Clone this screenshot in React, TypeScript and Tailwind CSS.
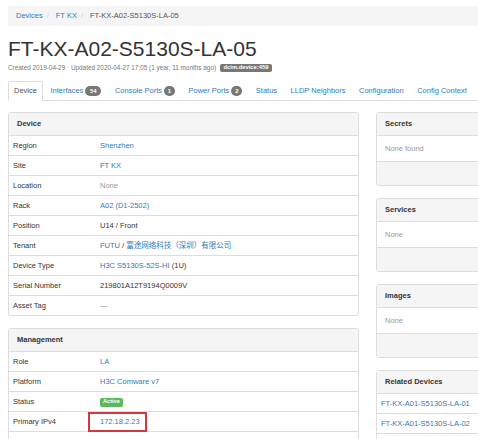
const linkCls = "text-[#337ab7]";

function Badge({ children, minW }: { children: React.ReactNode; minW?: string }) {
    return (
        <span
            className={`ml-[2px] inline-flex h-[10px] items-center justify-center rounded-full bg-[#777] px-[3px] text-[6px] font-bold leading-none text-white ${minW ?? ""}`}
        >
            {children}
        </span>
    );
}

function Tab({ label, badge, active }: { label: string; badge?: string; active?: boolean }) {
    return (
        <li className="-mb-px">
            <span
                className={
                    active
                        ? "flex h-[20px] items-center rounded-t-[2px] border border-[#ddd] border-b-white bg-white px-[5px] text-[#555]"
                        : "flex h-[20px] items-center border border-transparent px-[5px] text-[#337ab7]"
                }
            >
                {label}
                {badge && <Badge minW={badge.length > 1 ? "w-[16px]" : "w-[11px]"}>{badge}</Badge>}
            </span>
        </li>
    );
}

function Row({ label, children }: { label: string; children: React.ReactNode }) {
    return (
        <div className="flex h-[20px] items-center border-t border-[#ddd]">
            <div className="w-[87px] px-[4px]">{label}</div>
            <div className="px-[4px]">{children}</div>
        </div>
    );
}

function PanelHeader({ title }: { title: string }) {
    return (
        <div className="flex h-[22px] items-center bg-[#f5f5f5] px-[8px] font-bold text-[#333]">
            {title}
        </div>
    );
}

function EmptyPanel({ title, text }: { title: string; text: string }) {
    return (
        <div className="mb-[12px] overflow-hidden rounded-[3px] border border-[#ddd]">
            <PanelHeader title={title} />
            <div className="flex h-[26px] items-center border-t border-[#ddd] px-[8px] text-[#999]">
                {text}
            </div>
            <div className="h-[24px] border-t border-[#ddd] bg-[#f5f5f5]" />
        </div>
    );
}

export default function App() {
    return (
        <div
            className="h-[439px] w-[478px] overflow-hidden bg-white text-[7.5px] leading-[1.3] text-[#333]"
            style={{ fontFamily: '"Liberation Sans", "Noto Sans CJK SC", Arial, sans-serif' }}
        >
            <div className="w-[627px] pl-[8px]">

                <div className="mt-[6px] flex h-[20px] items-center rounded-[2px] bg-[#f5f5f5] px-[8px]">
                    <span className={linkCls}>Devices</span>
                    <span className="ml-[4px] mr-[7px] text-[#ccc]">/</span>
                    <span className={linkCls}>FT KX</span>
                    <span className="ml-[4px] mr-[7px] text-[#ccc]">/</span>
                    <span className="text-[#555]">FT-KX-A02-S5130S-LA-05</span>
                </div>

                <h1 className="mt-[11px] text-[21px] leading-[23px] font-normal text-[#333]">
                    FT-KX-A02-S5130S-LA-05
                </h1>

                <div className="mt-[3px] flex h-[10px] items-center text-[6.4px] text-[#777]">
                    <span>Created 2019-04-29 · Updated 2020-04-27 17:05 (1 year, 11 months ago)</span>
                    <span className="ml-[4px] rounded-[2px] bg-[#777] px-[3.5px] py-[1px] text-[5.8px] font-bold leading-none text-white">
                        dcim.device:459
                    </span>
                </div>

                <ul className="mt-[8px] flex gap-[1.5px] border-b border-[#ddd]">
                    <Tab label="Device" active />
                    <Tab label="Interfaces" badge="54" />
                    <Tab label="Console Ports" badge="1" />
                    <Tab label="Power Ports" badge="2" />
                    <Tab label="Status" />
                    <Tab label="LLDP Neighbors" />
                    <Tab label="Configuration" />
                    <Tab label="Config Context" />
                </ul>

                <div className="mt-[11px] flex gap-[17px]">

                    <div className="w-[351px] shrink-0">
                        <div className="mb-[12px] rounded-[3px] border border-[#ddd]">
                            <PanelHeader title="Device" />
                            <Row label="Region"><span className={linkCls}>Shenzhen</span></Row>
                            <Row label="Site"><span className={linkCls}>FT KX</span></Row>
                            <Row label="Location"><span className="text-[#999]">None</span></Row>
                            <Row label="Rack"><span className={linkCls}>A02 (D1-2502)</span></Row>
                            <Row label="Position">U14 / Front</Row>
                            <Row label="Tenant">
                                <span className={linkCls}>FUTU</span> / <span className={linkCls}>富途网络科技（深圳）有限公司</span>
                            </Row>
                            <Row label="Device Type">
                                <span className={linkCls}>H3C S5130S-52S-HI</span> (1U)
                            </Row>
                            <Row label="Serial Number">219801A12T9194Q0009V</Row>
                            <Row label="Asset Tag"><span className="text-[#999]">—</span></Row>
                        </div>

                        <div className="rounded-[3px] border border-[#ddd]">
                            <PanelHeader title="Management" />
                            <Row label="Role"><span className={linkCls}>LA</span></Row>
                            <Row label="Platform"><span className={linkCls}>H3C Comware v7</span></Row>
                            <Row label="Status">
                                <span className="inline-flex h-[9px] items-center rounded-[2px] bg-[#5cb85c] px-[3px] text-[5.6px] font-bold leading-none text-white">
                                    Active
                                </span>
                            </Row>
                            <Row label="Primary IPv4">
                                <span className={`relative ${linkCls}`}>
                                    172.18.2.23
                                    <span className="absolute top-[-5px] bottom-[-6px] left-[-12px] right-[-7px] border-2 border-[#d2393c]" />
                                </span>
                            </Row>
                            <Row label="Primary IPv6"><span className="text-[#999]">None</span></Row>
                        </div>
                    </div>

                    <div className="w-[251px] shrink-0">
                        <EmptyPanel title="Secrets" text="None found" />
                        <EmptyPanel title="Services" text="None" />
                        <EmptyPanel title="Images" text="None" />
                        <div className="rounded-[3px] border border-[#ddd]">
                            <PanelHeader title="Related Devices" />
                            <div className="flex h-[20px] items-center border-t border-[#ddd] px-[4px]">
                                <span className={linkCls}>FT-KX-A01-S5130S-LA-01</span>
                            </div>
                            <div className="flex h-[20px] items-center border-t border-[#ddd] px-[4px]">
                                <span className={linkCls}>FT-KX-A01-S5130S-LA-02</span>
                            </div>
                            <div className="flex h-[20px] items-center border-t border-[#ddd] px-[4px]">
                                <span className={linkCls}>FT-KX-A01-S5130S-LA-03</span>
                            </div>
                        </div>
                    </div>

                </div>
            </div>
        </div>
    );
}
